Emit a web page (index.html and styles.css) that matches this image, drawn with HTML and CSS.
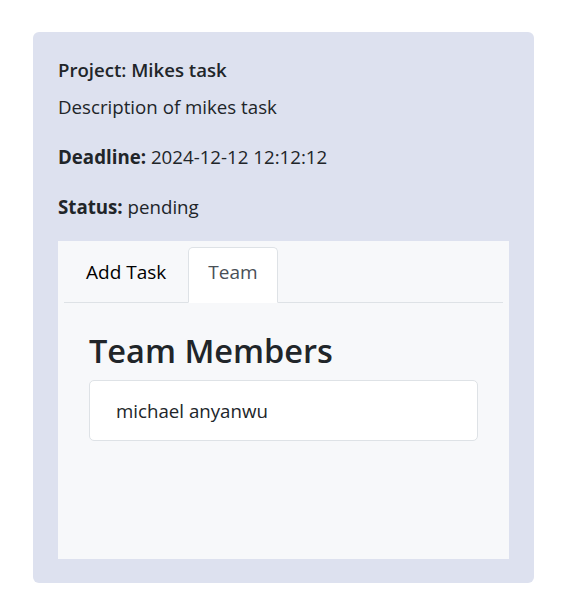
FILE: index.html
```html
<!DOCTYPE html>
<html>
<head>
<meta charset="utf-8">
<link rel="stylesheet" href="styles.css">
</head>
<body>
<div class="page">
  <div class="card">
    <h5 class="project">Project: Mikes task</h5>
    <p class="desc">Description of mikes task</p>
    <p class="field"><strong>Deadline:</strong> 2024-12-12 12:12:12</p>
    <p class="field"><strong>Status:</strong> pending</p>
    <div class="tabs">
      <ul class="nav">
        <li class="tab">Add Task</li>
        <li class="tab active">Team</li>
      </ul>
      <div class="pane">
        <h2 class="heading">Team Members</h2>
        <ul class="members">
          <li class="member">michael anyanwu</li>
        </ul>
      </div>
    </div>
  </div>
</div>
</body>
</html>
```
FILE: styles.css
```css
* { box-sizing: border-box; }
html, body { margin: 0; padding: 0; background: #fff; }
body {
  font-family: "Open Sans", "Noto Sans", sans-serif;
  color: #212529;
  font-size: 18.7px;
}
.page { padding: 32px 28px 26px 33px; }
.card {
  width: 501px;
  height: 551px;
  background: #dde1ef;
  border-radius: 6px;
  padding: 25px 25px 24px 25px;
  display: flex;
  flex-direction: column;
}
.project {
  margin: 0 0 11px;
  font-size: 18.6px;
  font-weight: 600;
  line-height: 26px;
}
.desc { margin: 0 0 24px; line-height: 26px; }
.field { margin: 0 0 24px; line-height: 26px; }
.field:last-of-type { margin-bottom: 21px; }
.field strong { font-weight: 700; }
.tabs {
  flex: 1;
  background: #f7f8fa;
  padding: 6px 6px 0 6px;
}
.nav {
  list-style: none;
  margin: 0;
  padding: 0;
  display: flex;
  border-bottom: 1px solid #dee2e6;
  height: 56px;
}
.tab {
  padding: 0 21px 6px;
  line-height: 48px;
  font-size: 19px;
  font-weight: 500;
  color: #000;
  border: 1px solid transparent;
  border-top-left-radius: 5px;
  border-top-right-radius: 5px;
  margin-bottom: -1px;
}
.tab.active {
  background: #fff;
  color: #495057;
  padding: 0 19px 6px;
  border-color: #dee2e6 #dee2e6 #fff;
}
.pane { padding: 27px 25px 0 25px; }
.heading {
  margin: 0 0 8px;
  font-size: 32.5px;
  font-weight: 600;
  line-height: 42px;
}
.members { list-style: none; margin: 0; padding: 0; }
.member {
  background: #fff;
  border: 1px solid #dee2e6;
  border-radius: 5px;
  height: 61px;
  padding: 0 26px;
  line-height: 59px;
  font-size: 18.7px;
  color: #212529;
}
```
